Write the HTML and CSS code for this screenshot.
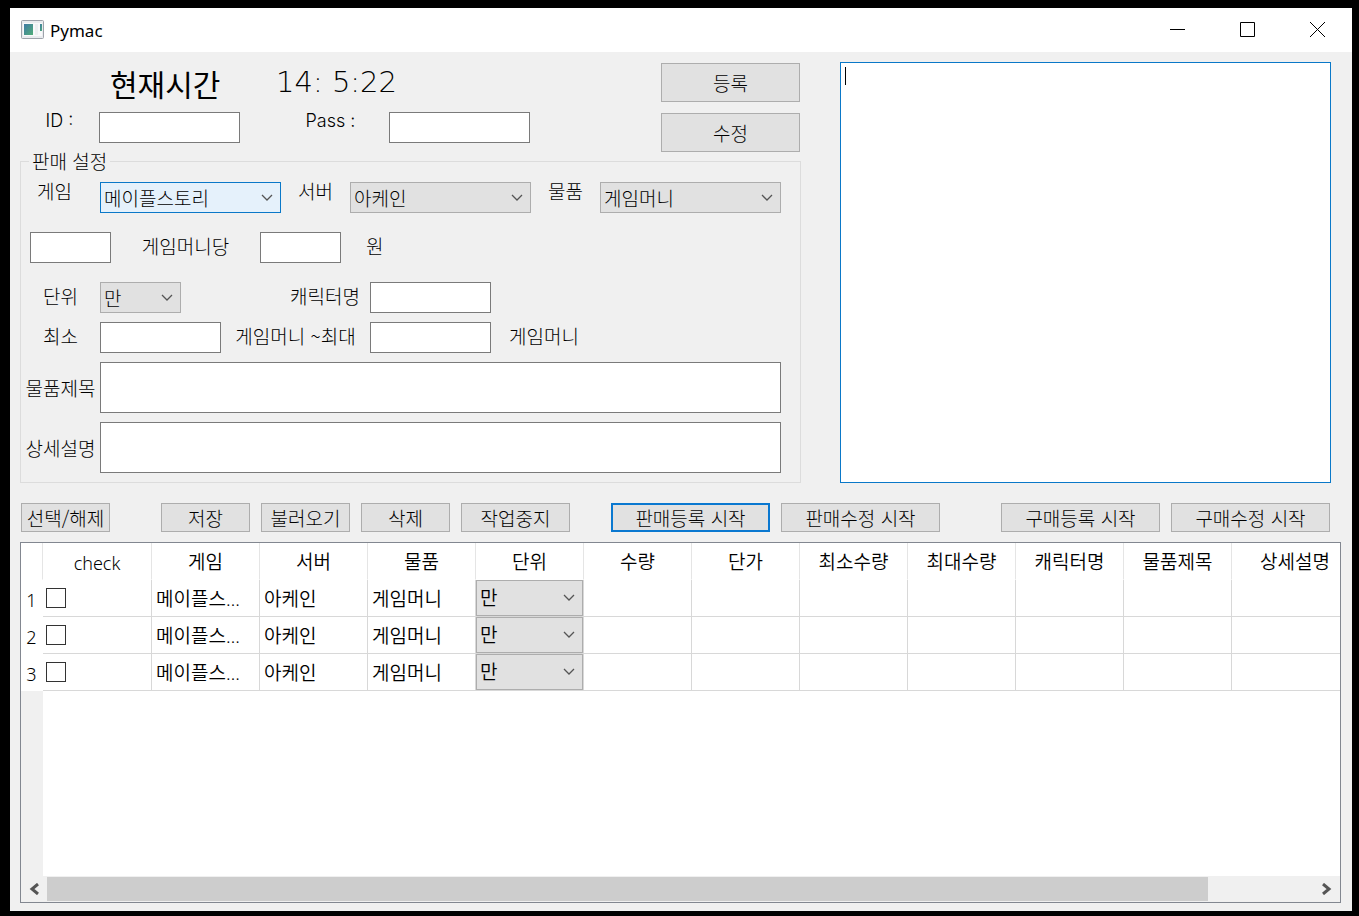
FILE: index.html
```html
<!DOCTYPE html>
<html lang="ko">
<head>
<meta charset="utf-8">
<title>Pymac</title>
<link rel="stylesheet" href="styles.css">
</head>
<body>
<div class="window">
  <header class="titlebar">
    <svg class="app-icon" width="23" height="19" viewBox="0 0 23 19" aria-hidden="true">
      <defs><linearGradient id="pane" x1="0" y1="0" x2="1" y2="1"><stop offset="0" stop-color="#3f7aa5"/><stop offset="1" stop-color="#51ad78"/></linearGradient></defs>
      <rect x=".5" y=".5" width="22" height="18" rx="1" fill="#e9ebee" stroke="#9ea3ab"/>
      <rect x="2" y="3" width="19" height="13" fill="#f8f9fa"/>
      <rect x="3" y="4" width="9" height="11" fill="url(#pane)"/>
      <rect x="14" y="4" width="3" height="11" fill="#eceff1"/>
      <rect x="19" y="4" width="2" height="7" fill="url(#pane)"/>
    </svg>
    <h1 class="app-name">Pymac</h1>
    <div class="window-controls">
      <button type="button" aria-label="최소화"><svg width="15" height="15" viewBox="0 0 15 15"><path d="M0 7.5H15"/></svg></button>
      <button type="button" aria-label="최대화"><svg width="15" height="15" viewBox="0 0 15 15"><path d="M.5.5H14.5V14.5H.5Z"/></svg></button>
      <button type="button" aria-label="닫기"><svg width="15" height="15" viewBox="0 0 15 15"><path d="M0 0L15 15M15 0L0 15"/></svg></button>
    </div>
  </header>

  <main class="client">
    <section class="top">
      <form class="settings">
        <div class="account">
          <div class="login">
            <h2 class="clock-title">현재시간</h2>
            <time class="clock">14: 5:22</time>
            <label for="user-id">ID :</label>
            <input id="user-id" type="text">
            <label class="label-pass" for="user-pass">Pass :</label>
            <input id="user-pass" type="password">
          </div>
          <div class="account-actions">
            <button class="btn" type="button">등록</button>
            <button class="btn" type="button">수정</button>
          </div>
        </div>

        <fieldset class="sale">
          <legend>판매 설정</legend>
          <div class="row row-selects">
            <label class="label-game" for="game">게임</label>
            <select id="game" class="active"><option>메이플스토리</option></select>
            <label for="server">서버</label>
            <select id="server"><option>아케인</option></select>
            <label for="goods">물품</label>
            <select id="goods"><option>게임머니</option></select>
          </div>
          <div class="row row-price">
            <input id="per-amount" type="text">
            <label for="per-amount">게임머니당</label>
            <input id="price" type="text">
            <label class="suffix-price" for="price">원</label>
          </div>
          <div class="row row-unit">
            <label for="unit">단위</label>
            <select id="unit"><option>만</option></select>
            <label class="label-right" for="character">캐릭터명</label>
            <input id="character" type="text">
          </div>
          <div class="row row-range">
            <label for="min">최소</label>
            <input id="min" type="text">
            <label for="max">게임머니 ~최대</label>
            <input id="max" type="text">
            <label class="suffix-range" for="max">게임머니</label>
          </div>
          <div class="row row-long">
            <label for="item-title">물품제목</label>
            <input id="item-title" type="text">
          </div>
          <div class="row row-long">
            <label for="item-detail">상세설명</label>
            <input id="item-detail" type="text">
          </div>
        </fieldset>
      </form>
      <div class="log">
        <textarea aria-label="로그"></textarea>
        <span class="caret"></span>
      </div>
    </section>

    <nav class="toolbar">
      <button class="btn" type="button">선택/해제</button>
      <div class="group group-file">
        <button class="btn" type="button">저장</button>
        <button class="btn" type="button">불러오기</button>
        <button class="btn" type="button">삭제</button>
        <button class="btn btn-medium" type="button">작업중지</button>
      </div>
      <div class="group group-sell">
        <button class="btn btn-default" type="button">판매등록 시작</button>
        <button class="btn" type="button">판매수정 시작</button>
      </div>
      <div class="group group-buy">
        <button class="btn" type="button">구매등록 시작</button>
        <button class="btn" type="button">구매수정 시작</button>
      </div>
    </nav>

    <section class="grid-view">
      <div class="viewport">
        <table>
          <colgroup><col class="col-index"><col class="col-check"><col span="10" class="col-data"><col class="col-last"></colgroup>
          <thead>
            <tr><td></td><th scope="col">check</th><th scope="col">게임</th><th scope="col">서버</th><th scope="col">물품</th><th scope="col">단위</th><th scope="col">수량</th><th scope="col">단가</th><th scope="col">최소수량</th><th scope="col">최대수량</th><th scope="col">캐릭터명</th><th scope="col">물품제목</th><th scope="col">상세설명</th></tr>
          </thead>
          <tbody>
            <tr><th scope="row">1</th><td class="cell-check"><input type="checkbox" aria-label="1행 선택"></td><td>메이플스토리</td><td>아케인</td><td>게임머니</td><td class="cell-select"><select aria-label="1행 단위"><option>만</option></select></td><td></td><td></td><td></td><td></td><td></td><td></td><td></td></tr>
            <tr><th scope="row">2</th><td class="cell-check"><input type="checkbox" aria-label="2행 선택"></td><td>메이플스토리</td><td>아케인</td><td>게임머니</td><td class="cell-select"><select aria-label="2행 단위"><option>만</option></select></td><td></td><td></td><td></td><td></td><td></td><td></td><td></td></tr>
            <tr><th scope="row">3</th><td class="cell-check"><input type="checkbox" aria-label="3행 선택"></td><td>메이플스토리</td><td>아케인</td><td>게임머니</td><td class="cell-select"><select aria-label="3행 단위"><option>만</option></select></td><td></td><td></td><td></td><td></td><td></td><td></td><td></td></tr>
          </tbody>
        </table>
        <div class="index-gutter"></div>
      </div>
      <div class="scrollbar">
        <button type="button" aria-label="왼쪽으로 스크롤"><svg width="10" height="12" viewBox="0 0 10 12"><path d="M9 1L3 6L9 11"/></svg></button>
        <div class="track"><div class="thumb"></div></div>
        <button type="button" aria-label="오른쪽으로 스크롤"><svg width="10" height="12" viewBox="0 0 10 12"><path d="M1 1L7 6L1 11"/></svg></button>
      </div>
    </section>
  </main>
</div>
</body>
</html>
```
FILE: styles.css
```css
* { box-sizing: border-box; }

body {
  margin: 0;
  min-height: 100vh;
  display: flex;
  padding: 8px 7px 5px 10px;
  background: #000;
  color: #000;
  font: 300 19px/20px "Noto Sans CJK KR", sans-serif;
}

button, input, select, textarea {
  margin: 0;
  font: inherit;
  color: inherit;
  border-radius: 0;
  outline: 0;
}

.window {
  flex: 1;
  min-width: 0;
  display: flex;
  flex-direction: column;
  background: #f0f0f0;
}

.titlebar {
  display: flex;
  align-items: center;
  height: 44px;
  padding: 0 0 2px 11px;
  background: #fff;
}
.app-name {
  margin: 3px 0 0 6px;
  font: 400 17px/24px "Noto Sans", sans-serif;
}
.window-controls { margin-left: auto; display: flex; }
.window-controls button {
  display: grid;
  place-items: center;
  width: 70px;
  height: 42px;
  padding: 0;
  border: 0;
  background: none;
}
.window-controls svg { fill: none; stroke: #000; stroke-width: 1; }

.client {
  flex: 1;
  display: flex;
  flex-direction: column;
  padding: 10px 11px 8px 10px;
}

.top { display: flex; gap: 39px; padding-right: 10px; }
.settings { width: 781px; flex: none; }

.account { display: flex; justify-content: space-between; height: 89px; }
.login {
  display: grid;
  grid-template-columns: 79px 141px 149px 141px;
  grid-template-rows: 50px 31px;
}
.login label {
  text-align: center;
  font-family: Inter, sans-serif;
  font-size: 18px;
  line-height: 18px;
  white-space: pre;
}
.login .label-pass { padding-left: 32px; }
.clock-title {
  grid-column: 1 / 3;
  margin: 0;
  padding-left: 90px;
  font-size: 30px;
  font-weight: 400;
  line-height: 42px;
}
.clock {
  grid-column: 3 / 5;
  padding-left: 36px;
  font: 200 29px/40px "DejaVu Sans Light", "DejaVu Sans", sans-serif;
  white-space: pre;
}
.account-actions { display: grid; gap: 11px; padding: 1px 1px 0 0; align-content: start; }
.account-actions .btn { width: 139px; height: 39px; }

input[type="text"], input[type="password"] {
  min-width: 0;
  width: 100%;
  height: 31px;
  padding: 0 4px;
  border: 1px solid #7a7a7a;
  background: #fff;
}

select {
  appearance: none;
  width: 100%;
  height: 31px;
  padding: 0 28px 0 3px;
  border: 1px solid #adadad;
  background: #e1e1e1 url("data:image/svg+xml,%3Csvg xmlns='http://www.w3.org/2000/svg' width='12' height='8'%3E%3Cpath d='M1 1L6 6L11 1' fill='none' stroke='%23555' stroke-width='1.3'/%3E%3C/svg%3E") no-repeat right 7px center;
}
select.active { border-color: #0a78c8; background-color: #e5f1fb; }

.btn {
  padding: 0;
  border: 1px solid #adadad;
  background-color: #e1e1e1;
  text-align: center;
  white-space: nowrap;
}
.btn-default { border: 2px solid #0a78d0; }

.sale {
  min-width: 0;
  margin: 0;
  padding: 11px 19px 9px 0;
  border: 1px solid #dcdcdc;
}
.sale legend { margin-left: 8px; padding: 0 3px; line-height: 20px; }
.row { display: grid; align-items: center; margin-bottom: 9px; }
.row:last-child { margin-bottom: 0; }
.row label { padding-bottom: 4px; text-align: center; white-space: nowrap; }
.row-selects { grid-template-columns: 79px 181px 69px 181px 69px 181px; margin-bottom: 19px; }
.row-selects label { align-self: start; line-height: 18px; }
.row .label-game { padding-right: 12px; }
.row-price { grid-template-columns: 81px 149px 81px auto; padding-left: 9px; margin-bottom: 19px; }
.row .suffix-price { text-align: left; padding-left: 25px; }
.row-unit { grid-template-columns: 79px 81px 189px 121px; }
.row .label-right { text-align: right; padding-right: 10px; }
.row-range { grid-template-columns: 79px 121px 149px 121px auto; }
.row .suffix-range { text-align: left; padding-left: 18px; }
.row-long { grid-template-columns: 79px 1fr; }
.row-long label { padding-bottom: 0; }
.row-long input[type="text"] { height: 51px; }

.log { position: relative; flex: 1; display: flex; min-width: 0; }
.log textarea {
  flex: 1;
  min-width: 0;
  padding: 4px 5px;
  border: 1px solid #0a78c8;
  background: #fff;
  resize: none;
}
.caret {
  position: absolute;
  left: 5px;
  top: 5px;
  width: 1px;
  height: 18px;
  background: #000;
}

.toolbar {
  display: flex;
  padding: 20px 11px 10px 1px;
}
.toolbar .btn { width: 89px; height: 29px; }
.group { display: flex; gap: 11px; }
.group-file { margin-left: 51px; }
.group-sell { margin-left: 41px; }
.group-buy { margin-left: auto; }
.toolbar .btn-medium { width: 109px; }
.toolbar .group-sell .btn, .toolbar .group-buy .btn { width: 159px; }

.grid-view {
  flex: 1;
  display: flex;
  flex-direction: column;
  border: 1px solid #828790;
  background: #fff;
}
.viewport {
  flex: 1;
  display: flex;
  flex-direction: column;
  overflow: hidden;
}
table {
  width: 1338px;
  table-layout: fixed;
  border-collapse: separate;
  border-spacing: 0;
  font-family: "Noto Sans", "Noto Sans CJK KR", sans-serif;
  font-weight: 350;
}
.col-index { width: 22px; }
.col-check { width: 109px; }
.col-data { width: 108px; }
.col-last { width: 127px; }
th, td {
  height: 37px;
  padding: 2px 4px 0;
  border-right: 1px solid #d8d8d8;
  border-bottom: 1px solid #d8d8d8;
  overflow: hidden;
  text-overflow: ellipsis;
  white-space: nowrap;
  font-weight: 350;
}
thead th, thead td { border-right-color: #e5e5e5; border-bottom-color: transparent; }
tbody th { padding: 4px 0 0; border-color: transparent; }
tbody th, thead th:nth-child(2) { padding-top: 4px; font-size: 18px; }
.cell-check { padding: 0 3px; }
.cell-select { padding: 0; }
td select { display: block; height: 36px; }
input[type="checkbox"] {
  appearance: none;
  display: block;
  width: 20px;
  height: 20px;
  border: 1px solid #333;
  background: #fff;
}
.index-gutter { flex: 1; width: 22px; background: #f0f0f0; }

.scrollbar {
  display: flex;
  height: 26px;
  padding: 1px 0;
  background: #f0f0f0;
}
.scrollbar button {
  display: grid;
  place-items: center;
  width: 26px;
  padding: 0;
  border: 0;
  background: none;
}
.scrollbar svg { fill: none; stroke: #555; stroke-width: 3; }
.track { flex: 1; }
.thumb { width: 1161px; max-width: 92%; height: 100%; background: #cdcdcd; }
```
